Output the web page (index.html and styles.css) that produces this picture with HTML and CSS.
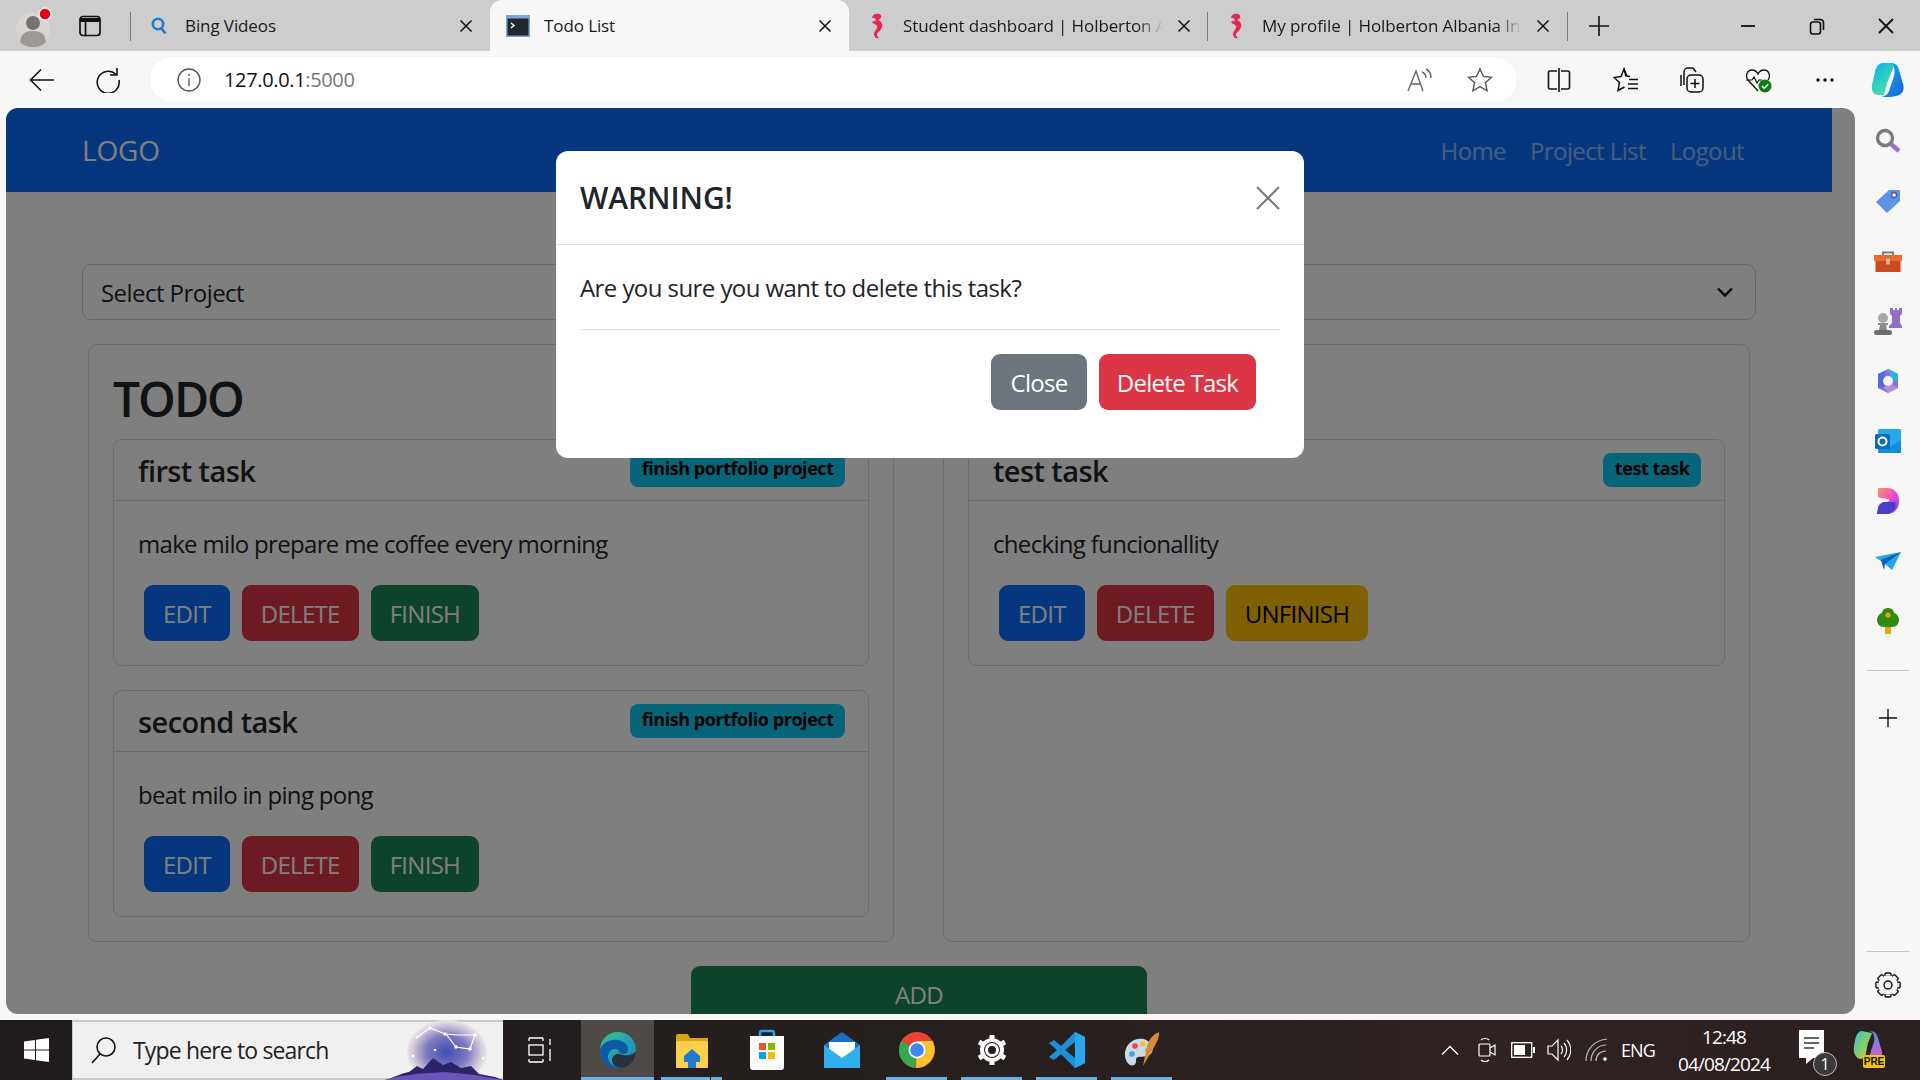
FILE: index.html
```html
<!DOCTYPE html>
<html lang="en">
<head>
<meta charset="utf-8">
<title>Todo List</title>
<link rel="stylesheet" href="styles.css">
</head>
<body>
<div class="tabstrip">
  <div class="strip-lead">
    <svg class="avatar" width="36" height="42" viewBox="0 0 36 42"><circle cx="17" cy="23" r="17" fill="#d8d6d2"/><circle cx="17" cy="17" r="7" fill="#77726c"/><path d="M4 36c1-9 6-11 13-11s12 2 13 11c-4 4-8 5-13 5s-9-1-13-5z" fill="#9c9893"/><circle cx="29" cy="8" r="6" fill="#e8000d" stroke="#f4f4f4" stroke-width="1.5"/></svg>
    <svg width="22" height="22" viewBox="0 0 22 22" fill="none" stroke="#111" stroke-width="1.7"><rect x="1" y="1.5" width="20" height="19" rx="3"/><path d="M1 5h20" stroke-width="4"/><path d="M6.5 5v15"/></svg>
  </div>
  <div class="tab">
    <span class="tab-icon"><svg width="18" height="20" viewBox="0 0 18 20" fill="none" stroke="#1f78d1" stroke-width="2.6"><circle cx="8" cy="8" r="5.2"/><path d="M11.5 12.5l4 5"/></svg></span>
    <span class="tab-title">Bing Videos</span>
    <svg class="tab-x" width="14" height="14" viewBox="0 0 14 14"><path d="M1.500 1.500l11 11M12.500 1.500l-11 11" stroke="#111" stroke-width="1.500"/></svg>
  </div>
  <div class="tab tab-active">
    <span class="tab-icon"><svg width="24" height="22" viewBox="0 0 24 22"><rect width="24" height="22" fill="#7ba7d8"/><rect x="1.500" y="3.500" width="21" height="17" fill="#23262a"/><path d="M5 8l3 2.500L5 13" stroke="#fff" stroke-width="1.300" fill="none"/></svg></span>
    <span class="tab-title">Todo List</span>
    <svg class="tab-x" width="14" height="14" viewBox="0 0 14 14"><path d="M1.500 1.500l11 11M12.500 1.500l-11 11" stroke="#111" stroke-width="1.500"/></svg>
  </div>
  <div class="tab">
    <span class="tab-icon"><svg width="14" height="26" viewBox="0 0 14 26"><path d="M6 1c4-1 6 2 5 4L8 7c3 1 5 4 4 7-1 4-5 5-5 8 0 2 2 2 2 3-3 1-5-1-5-4 0-3 4-5 3-8-1-2-4-2-5-4 1-1 3-1 4-1L5 5 2 5c0-2 2-4 4-4z" fill="#e8254f"/></svg></span>
    <span class="tab-title tab-fade">Student dashboard | Holberton A</span>
    <svg class="tab-x" width="14" height="14" viewBox="0 0 14 14"><path d="M1.500 1.500l11 11M12.500 1.500l-11 11" stroke="#111" stroke-width="1.500"/></svg>
  </div>
  <div class="tab tab-sep">
    <span class="tab-icon"><svg width="14" height="26" viewBox="0 0 14 26"><path d="M6 1c4-1 6 2 5 4L8 7c3 1 5 4 4 7-1 4-5 5-5 8 0 2 2 2 2 3-3 1-5-1-5-4 0-3 4-5 3-8-1-2-4-2-5-4 1-1 3-1 4-1L5 5 2 5c0-2 2-4 4-4z" fill="#e8254f"/></svg></span>
    <span class="tab-title tab-fade">My profile | Holberton Albania In</span>
    <svg class="tab-x" width="14" height="14" viewBox="0 0 14 14"><path d="M1.500 1.500l11 11M12.500 1.500l-11 11" stroke="#111" stroke-width="1.500"/></svg>
  </div>
  <div class="tab-end">
    <svg width="22" height="22" viewBox="0 0 22 22"><path d="M11 1v20M1 11h20" stroke="#111" stroke-width="1.600"/></svg>
  </div>
  <div class="winctl">
    <svg width="16" height="16" viewBox="0 0 16 16"><path d="M1 8h14" stroke="#111" stroke-width="1.800"/></svg>
    <svg width="16" height="18" viewBox="0 0 16 18" fill="none" stroke="#111" stroke-width="1.600"><rect x="1.500" y="5" width="10" height="12" rx="2.500"/><path d="M5 2.500h6c2 0 3.500 1.500 3.500 3.500v7"/></svg>
    <svg width="16" height="16" viewBox="0 0 16 16"><path d="M1 1l14 14M15 1L1 15" stroke="#111" stroke-width="1.800"/></svg>
  </div>
</div>

<div class="toolbar">
  <div class="tool-lead">
    <span class="slot"><svg width="26" height="24" viewBox="0 0 26 24" fill="none" stroke="#111" stroke-width="1.600"><path d="M25 12H2M12 1.500L1.500 12 12 22.500"/></svg></span>
    <span class="slot"><svg width="26" height="26" viewBox="0 0 26 26" fill="none" stroke="#111" stroke-width="1.600"><path d="M21 7.500A11 11 0 1 0 24 13"/><path d="M22 1v7h-7"/></svg></span>
  </div>
  <div class="address">
    <svg width="24" height="24" viewBox="0 0 24 24" fill="none" stroke="#555" stroke-width="1.400"><circle cx="12" cy="12" r="11"/><path d="M12 10.500V18M12 6v2"/></svg>
    <span class="url">127.0.0.1<span class="url-dim">:5000</span></span>
    <span class="addr-actions">
      <svg width="26" height="26" viewBox="0 0 26 26" fill="none" stroke="#666" stroke-width="1.400"><path d="M1 24L9 4l7 20M4 17h10"/><path d="M15 5c3 1 4 3 4 6M19 2c4 2 5 5 5 9"/></svg>
      <svg width="26" height="26" viewBox="0 0 26 26" fill="none" stroke="#555" stroke-width="1.400"><path d="M13 2l3.400 7.400 8 .9-6 5.400 1.700 8L13 19.700 5.900 23.700l1.700-8-6-5.400 8-.9z"/></svg>
    </span>
  </div>
  <div class="tool-actions">
    <span class="slot"><svg width="24" height="24" viewBox="0 0 24 24" fill="none" stroke="#111" stroke-width="1.600"><path d="M10 3H3a1.500 1.500 0 0 0-1.500 1.500v15A1.500 1.500 0 0 0 3 21h7M14 3h7a1.500 1.500 0 0 1 1.500 1.500v15A1.500 1.500 0 0 1 21 21h-7M12 0v24"/></svg></span>
    <span class="slot"><svg width="26" height="26" viewBox="0 0 26 26" fill="none" stroke="#111" stroke-width="1.500"><path d="M13 9.500L11 2 8 9.500l-7 1 5.500 5-1.500 8 6.500-3.500"/><path d="M11 2l3 7 3 .5"/><path d="M16 12.500h9M15 17h10M15 21.500h10"/></svg></span>
    <span class="slot"><svg width="26" height="28" viewBox="0 0 26 28" fill="none" stroke="#111" stroke-width="1.500"><path d="M5 19V6a4 4 0 0 1 4-4h5l3 4"/><path d="M2 20V9"/><rect x="8" y="9" width="16" height="17" rx="4"/><path d="M16 13v9M11.500 17.500h9"/></svg></span>
    <span class="slot"><svg width="28" height="26" viewBox="0 0 28 26"><path d="M13 24L3 13C0 9 2 3 7 3c3 0 5 2 6 4 1-2 3-4 6-4 5 0 7 6 4 10" fill="none" stroke="#111" stroke-width="1.300"/><path d="M1 13h6l2-3 3 6 2-3h3" fill="none" stroke="#111" stroke-width="1.200"/><circle cx="20" cy="19" r="6.500" fill="#107c10"/><path d="M17 19l2.200 2.200 4-4" stroke="#fff" stroke-width="1.500" fill="none"/></svg></span>
    <span class="slot"><svg width="20" height="6" viewBox="0 0 20 6" fill="#111"><circle cx="3" cy="3" r="1.700"/><circle cx="10" cy="3" r="1.700"/><circle cx="17" cy="3" r="1.700"/></svg></span>
  </div>
  <svg class="copilot" width="36" height="38" viewBox="0 0 36 38"><defs><linearGradient id="cp" x1="0" y1="0" x2=".6" y2="1"><stop offset="0" stop-color="#0fa8e8"/><stop offset=".55" stop-color="#2ecdc4"/><stop offset="1" stop-color="#4fe09c"/></linearGradient><linearGradient id="cb" x1="0" y1="0" x2="1" y2="1"><stop offset="0" stop-color="#1fb6f0"/><stop offset="1" stop-color="#1460d8"/></linearGradient></defs><path d="M11 2C7 3 5 6 4 11L1 24c-1 6 2 10 7 10h5l3-12 6-14c1-3 1-6-2-6z" fill="url(#cp)"/><path d="M20 2c4 0 7 2 8 7l4 14c2 6-1 11-7 12-3 1-8 1-14 1 5-2 7-4 8-9l4-12c1-4 1-10-3-13z" fill="url(#cb)"/></svg>
</div>

<div class="workspace">
  <main class="page">
    <div class="site">
      <nav class="navbar">
        <span class="brand">LOGO</span>
        <div class="nav-links">
          <a class="nav-link">Home</a>
          <a class="nav-link">Project List</a>
          <a class="nav-link">Logout</a>
        </div>
      </nav>
      <div class="content">
        <div class="select">
          <span>Select Project</span>
          <svg width="18" height="12" viewBox="0 0 18 12" fill="none" stroke="#111" stroke-width="2.400"><path d="M2 2.500l7 7 7-7"/></svg>
        </div>
        <div class="columns">
          <section class="column">
            <h1 class="col-title">TODO</h1>
            <article class="card">
              <header class="card-head"><h3 class="card-title">first task</h3><span class="badge">finish portfolio project</span></header>
              <div class="card-body">
                <p class="card-text">make milo prepare me coffee every morning</p>
                <div class="actions"><button class="btn btn-blue">EDIT</button><button class="btn btn-red">DELETE</button><button class="btn btn-green">FINISH</button></div>
              </div>
            </article>
            <article class="card">
              <header class="card-head"><h3 class="card-title">second task</h3><span class="badge">finish portfolio project</span></header>
              <div class="card-body">
                <p class="card-text">beat milo in ping pong</p>
                <div class="actions"><button class="btn btn-blue">EDIT</button><button class="btn btn-red">DELETE</button><button class="btn btn-green">FINISH</button></div>
              </div>
            </article>
          </section>
          <section class="column">
            <div class="col-title"></div>
            <article class="card">
              <header class="card-head"><h3 class="card-title">test task</h3><span class="badge">test task</span></header>
              <div class="card-body">
                <p class="card-text">checking funcionallity</p>
                <div class="actions"><button class="btn btn-blue">EDIT</button><button class="btn btn-red">DELETE</button><button class="btn btn-yellow">UNFINISH</button></div>
              </div>
            </article>
          </section>
        </div>
        <button class="btn btn-green btn-add">ADD</button>
      </div>
    </div>
    <div class="backdrop">
      <div class="modal">
        <header class="modal-head">
          <h2 class="modal-title">WARNING!</h2>
          <svg width="24" height="24" viewBox="0 0 24 24"><path d="M1 1l22 22M23 1L1 23" stroke="#7c7c7c" stroke-width="2.200"/></svg>
        </header>
        <div class="modal-body">
          <p class="modal-text">Are you sure you want to delete this task?</p>
          <hr class="modal-rule">
          <div class="modal-actions"><button class="btn btn-grey-solid">Close</button><button class="btn btn-red-solid">Delete Task</button></div>
        </div>
      </div>
    </div>
  </main>
  <aside class="sidebar">
    <span class="side-slot"><svg width="26" height="26" viewBox="0 0 26 26"><circle cx="10" cy="10" r="7.500" fill="none" stroke="#7a7a7a" stroke-width="3.400"/><path d="M16 16l8 7" stroke="#a070d8" stroke-width="4.500"/></svg></span>
    <span class="side-slot"><svg width="26" height="26" viewBox="0 0 26 26"><path d="M14 2h10a1 1 0 0 1 1 1v10L12 25 1 14z" fill="#5d92e6"/><circle cx="19" cy="7" r="2.500" fill="#fff" stroke="#4a4fa8" stroke-width="1.300"/></svg></span>
    <span class="side-slot"><svg width="28" height="22" viewBox="0 0 28 22"><path d="M9 6V2.500h10V6" fill="none" stroke="#7a7a7a" stroke-width="2"/><rect y="5" width="28" height="6" fill="#e96a32"/><rect x="1.500" y="11" width="25" height="11" fill="#cc4a1c"/><rect x="12" y="8.500" width="4" height="6" fill="#bbb"/></svg></span>
    <span class="side-slot"><svg width="28" height="28" viewBox="0 0 28 28"><path d="M16 1h3v2h2V1h2v2h2V1h3v6l-2 2v7l2 3v2H15v-2l3-3V9l-2-2z" fill="#9170c8"/><circle cx="9" cy="11" r="5" fill="#a8a8a8"/><path d="M4 16h10v2h-2l1 5H5l1-5H4z" fill="#8c8c8c"/><rect y="23" width="18" height="5" rx="2.500" fill="#6e6e6e"/></svg></span>
    <span class="side-slot"><svg width="26" height="26" viewBox="0 0 26 26"><path d="M13 1l10 5v14l-10 5-10-5V6z" fill="#8a6fd8"/><path d="M13 1l10 5v8l-6-3z" fill="#27b6d8"/><path d="M3 6l7-3-1 16-6 1z" fill="#4b6ed8"/><path d="M9 19l8-3 6 4-10 5z" fill="#b88ce0"/><circle cx="13" cy="13" r="5" fill="#f7f7f7"/></svg></span>
    <span class="side-slot"><svg width="26" height="24" viewBox="0 0 26 24"><rect x="3" width="23" height="24" rx="1.500" fill="#28a8ea"/><path d="M3 11l11.500 7L26 11v12a1 1 0 0 1-1 1H4a1 1 0 0 1-1-1z" fill="#0f8ee0"/><rect y="5" width="15" height="15" rx="1.500" fill="#0a6cbd"/><circle cx="7.500" cy="12.500" r="4" fill="none" stroke="#fff" stroke-width="2"/></svg></span>
    <span class="side-slot"><svg width="24" height="26" viewBox="0 0 24 26"><defs><linearGradient id="ds" x1="0" y1="0" x2="1" y2="1"><stop offset="0" stop-color="#fb9a5a"/><stop offset=".5" stop-color="#ea4fd0"/><stop offset="1" stop-color="#7a3fe0"/></linearGradient></defs><path d="M2 0h9c8 0 12 6 12 13 0 8-5 13-12 13H1l1-6c1-4 4-6 8-6 3 0 4-2 2-3-3-1-9 0-10-3z" fill="url(#ds)"/><path d="M1 26l1-6c1-4 4-6 8-6h9c3 5-3 12-8 12z" fill="#4b3dc8"/></svg></span>
    <span class="side-slot"><svg width="26" height="18" viewBox="0 0 26 18"><path d="M0 5L26 0 17 18l-7-6z" fill="#22a7ea"/><path d="M6 8L26 0 10 12l-1 6z" fill="#0d5db0"/></svg></span>
    <span class="side-slot"><svg width="22" height="26" viewBox="0 0 22 26"><rect x="8" y="17" width="6" height="9" fill="#e6a800"/><path d="M11 0c4 0 6 3 6 5 3 1 5 4 5 7 0 4-3 7-7 7H7c-4 0-7-3-7-7 0-3 2-6 5-7 0-2 2-5 6-5z" fill="#2f8b0e"/><circle cx="11" cy="7" r="2.500" fill="#e6a800"/></svg></span>
    <span class="side-rule"></span>
    <span class="side-slot side-plus"><svg width="18" height="18" viewBox="0 0 18 18"><path d="M9 0v18M0 9h18" stroke="#111" stroke-width="1.400"/></svg></span>
    <span class="side-rule side-rule-low"></span>
    <span class="side-slot"><svg width="26" height="26" viewBox="0 0 26 26" fill="none"><g stroke="#111" stroke-width="1.400"><rect x="10" y="1" width="6" height="24" rx="1"/><rect x="10" y="1" width="6" height="24" rx="1" transform="rotate(45 13 13)"/><rect x="10" y="1" width="6" height="24" rx="1" transform="rotate(90 13 13)"/><rect x="10" y="1" width="6" height="24" rx="1" transform="rotate(135 13 13)"/><circle cx="13" cy="13" r="9"/></g><circle cx="13" cy="13" r="9.800" fill="#f7f7f7"/><circle cx="13" cy="13" r="4" stroke="#111" stroke-width="1.400"/></svg></span>
  </aside>
</div>

<footer class="taskbar">
  <span class="start"><svg width="25" height="24" viewBox="0 0 25 24" fill="#fff"><path d="M0 3.500l11-1.500v9.500H0zM12 1.800L25 0v11.500H12zM0 12.500h11V22L0 20.500zM12 12.500h13V24l-13-1.800z"/></svg></span>
  <div class="task-search">
    <svg width="26" height="28" viewBox="0 0 26 28" fill="none" stroke="#111" stroke-width="1.600"><circle cx="15" cy="11" r="9"/><path d="M9 18L1 27"/></svg>
    <span class="search-text">Type here to search</span>
    <svg class="search-art" width="118" height="60" viewBox="0 0 118 60"><defs><radialGradient id="sa" cx=".5" cy=".5" r=".52"><stop offset="0" stop-color="#3c4fb4"/><stop offset=".5" stop-color="#7f79c0"/><stop offset=".8" stop-color="#cfc4d8"/><stop offset="1" stop-color="#f0f0f0"/></radialGradient></defs><ellipse cx="62" cy="32" rx="40" ry="32" fill="url(#sa)"/><path d="M0 60c8-2 14-6 24-8l8-6 6 3 10-11 10 7 8-3 10 6 10-2 8 8 16 3 8 3z" fill="#2c2468"/><path d="M0 60c10-4 20-4 30-6l30-2 30 3 28 5z" fill="#6a55b8"/><path d="M32 17l13-9 15 6 14 1 16 0-5 14-14-2-10-13" fill="none" stroke="#fff" stroke-width="1.200"/><g fill="#fff"><circle cx="45" cy="8" r="1.800"/><circle cx="60" cy="14" r="1.800"/><circle cx="90" cy="15" r="1.800"/><circle cx="85" cy="29" r="1.800"/><circle cx="71" cy="27" r="1.800"/><circle cx="32" cy="17" r="1.500"/><circle cx="28" cy="36" r="1.300"/><circle cx="50" cy="30" r="1.300"/><circle cx="98" cy="38" r="1.300"/></g></svg>
  </div>
  <div class="task-apps">
    <span class="task-slot task-view"><svg width="26" height="26" viewBox="0 0 26 26" fill="none" stroke="#fff" stroke-width="1.300"><path d="M1 1h14M1 25h14M1 25v-3M15 25v-3M1 1v3M15 1v3"/><rect x="1" y="8" width="14" height="10"/><path d="M22 2v6M22 12v12"/></svg></span>
    <span class="task-slot task-edge is-open"><svg width="38" height="38" viewBox="0 0 38 38"><defs><linearGradient id="ed" x1="0" y1="0" x2="1" y2="1"><stop offset="0" stop-color="#36c88a"/><stop offset="1" stop-color="#1a7ad0"/></linearGradient></defs><circle cx="19" cy="19" r="18" fill="url(#ed)"/><path d="M1 19C3 9 19 5 27 13c4 4 2 10-2 10-6 0-4-5-9-5S7 24 10 30c2 4 6 7 12 7C10 39 0 30 1 19z" fill="#0c59a4"/><path d="M24 24c6 1 11-1 13-4 0 8-6 16-14 17-6 0-10-3-10-8 0-4 4-7 8-6z" fill="#27343f"/></svg></span>
    <span class="task-slot is-open is-split"><svg width="32" height="36" viewBox="0 0 32 36"><path d="M0 4a2 2 0 0 1 2-2h10l2 4h18v30H0z" fill="#d8a318"/><rect y="9" width="32" height="27" rx="2" fill="#fbd14b"/><path d="M8 24l8-7 8 7v6h-4v6h-8v-6H8z" fill="#1f7cd0"/></svg></span>
    <span class="task-slot"><svg width="36" height="42" viewBox="0 0 36 42"><path d="M11 8V4a2 2 0 0 1 2-2h10a2 2 0 0 1 2 2v4" fill="none" stroke="#2aa0e8" stroke-width="2.500"/><path d="M1 7h34v31a3 3 0 0 1-3 3H4a3 3 0 0 1-3-3z" fill="#fbfbfb"/><rect x="10" y="14" width="7" height="7" fill="#f25022"/><rect x="19" y="14" width="7" height="7" fill="#7fba00"/><rect x="10" y="23" width="7" height="7" fill="#00a4ef"/><rect x="19" y="23" width="7" height="7" fill="#ffb900"/></svg></span>
    <span class="task-slot"><svg width="36" height="36" viewBox="0 0 36 36"><path d="M18 0l18 13v23H0V13z" fill="#1b6fc0"/><path d="M5 10h26v10l-13 8-13-8z" fill="#fff"/><path d="M0 13l18 13 18-13v23H0z" fill="#2fb0ec"/></svg></span>
    <span class="task-slot is-open"><svg width="36" height="36" viewBox="0 0 36 36"><circle cx="18" cy="18" r="18" fill="#ea4335"/><path d="M18 18L2.400 9C-1 15-1 22 2.400 27 5 32 10 35 16 36z" fill="#34a853"/><path d="M18 9h15.500C36 14 37 21 33 27 30 32 24 36 17 36z" fill="#fbc02d"/><circle cx="18" cy="18" r="8.500" fill="#fff"/><circle cx="18" cy="18" r="6.800" fill="#4285f4"/></svg></span>
    <span class="task-slot is-open"><svg width="28" height="30" viewBox="0 0 28 30" fill="none" stroke="#fff"><circle cx="14" cy="15" r="5.500" stroke-width="3"/><circle cx="14" cy="15" r="10" stroke-width="4"/><path d="M14 0v6M14 24v6M1 7l5 3M22 20l5 3M27 7l-5 3M6 20l-5 3" stroke-width="5"/></svg></span>
    <span class="task-slot is-open"><svg width="36" height="36" viewBox="0 0 36 36"><path d="M26 0l10 5v26l-10 5-14-14-7 6-5-3 8-7-8-7 5-3 7 6z" fill="#1c90d8"/><path d="M26 0l10 5v26l-10 5z" fill="#2aa6ee"/><path d="M26 10v16l-10-8z" fill="#2b2424"/></svg></span>
    <span class="task-slot is-open"><svg width="38" height="38" viewBox="0 0 38 38"><path d="M21 8C10 6 1 14 2 25c.5 6 5 11 9 9 4-2 0-7 4-8 5-1 11 1 14-5 3-5-2-11-8-13z" fill="#c9d9e6"/><circle cx="12" cy="15" r="2.800" fill="#e8483f"/><circle cx="20" cy="13" r="2.800" fill="#f2c12e"/><circle cx="9" cy="23" r="2.800" fill="#3fa0e0"/><circle cx="25" cy="19" r="2.600" fill="#55b04f"/><path d="M36 1c1 5-3 12-6 17L20 35l4-20c1-4 3-8 8-12z" fill="#d88a36"/></svg></span>
  </div>
  <div class="tray">
    <svg width="18" height="10" viewBox="0 0 18 10" fill="none" stroke="#fff" stroke-width="1.300"><path d="M1 9.500l8-8 8 8"/></svg>
    <svg width="18" height="26" viewBox="0 0 18 26" fill="none" stroke="#fff" stroke-width="1.200"><path d="M3 3c2-2 6-2 8 0M3 23c2 2 6 2 8 0"/><rect x="1" y="7" width="11" height="12" rx="1"/><path d="M12 11l5-3v10l-5-3"/></svg>
    <svg width="24" height="16" viewBox="0 0 24 16"><rect x=".7" y=".7" width="20" height="14.600" fill="none" stroke="#fff" stroke-width="1.300"/><rect x="3" y="3" width="11" height="10" fill="#fff"/><rect x="22" y="5" width="2" height="6" fill="#fff"/></svg>
    <svg width="24" height="24" viewBox="0 0 24 24" fill="none" stroke="#fff" stroke-width="1.200"><path d="M1 8h4l6-6v20l-6-6H1z"/><path d="M14 8c2 2 2 6 0 8M17 5c3.500 4 3.500 10 0 14M20 2c5 6 5 14 0 20"/></svg>
    <svg width="24" height="24" viewBox="0 0 24 24" fill="none" stroke="#bdbdbd" stroke-width="1.200"><path d="M1 23C1 11 10 2 22 1M6 23c0-9 7-16 15-16M11 23c0-6 4-10 10-10"/><circle cx="20" cy="21" r="1.800" fill="#fff" stroke="none"/></svg>
    <span class="tray-lang">ENG</span>
    <span class="clock"><span>12:48</span><span>04/08/2024</span></span>
    <span class="notify">
      <svg width="25" height="36" viewBox="0 0 25 36"><path d="M0 0h25v28H14l-7 6v-6H0z" fill="#fff"/><path d="M5 8h15M5 13h15M5 18h10" stroke="#333" stroke-width="1.400"/></svg>
      <span class="notify-count">1</span>
    </span>
    <svg width="34" height="38" viewBox="0 0 34 38"><defs><linearGradient id="cq" x1="0" y1="0" x2="1" y2="1"><stop offset="0" stop-color="#2bc2e8"/><stop offset=".5" stop-color="#7fcf68"/><stop offset="1" stop-color="#f3c730"/></linearGradient><linearGradient id="cr" x1="0" y1="0" x2="0" y2="1"><stop offset="0" stop-color="#4d8ee8"/><stop offset="1" stop-color="#e05ad0"/></linearGradient></defs><path d="M8 0C3 2 2 8 1 16c-1 6 2 12 7 12l4-2 3-14 4-10z" fill="url(#cq)"/><path d="M17 0c5 0 7 3 8 7l4 14c1 4-3 8-8 8H12c4-2 5-5 6-9l3-9c1-4 0-9-4-11z" fill="url(#cr)"/><rect x="10" y="24" width="22" height="13" rx="2" fill="#f4c20d"/><text class="pre-text" x="21" y="34">PRE</text></svg>
  </div>
</footer>
</body>
</html>
```
FILE: styles.css
```css
* { box-sizing: border-box; }
html, body { margin: 0; padding: 0; }
body {
  width: 1920px;
  height: 1080px;
  overflow: hidden;
  display: flex;
  flex-direction: column;
  background: #f7f7f7;
  font-family: "Open Sans", "Noto Sans", sans-serif;
  color: #212529;
}
h1, h2, h3, p { margin: 0; }
svg { display: block; flex: none; }

/* tab strip */
.tabstrip { height: 51px; flex: none; display: flex; align-items: center; background: #cdcdcd; }
.strip-lead { width: 131px; height: 100%; display: flex; align-items: center; gap: 27px; padding: 0 0 0 16px; position: relative; }
.strip-lead::after, .tab-sep::before, .tab-end::before {
  content: "";
  position: absolute;
  top: 12px;
  bottom: 10px;
  width: 1px;
  background: #7c7c7c;
}
.strip-lead::after { right: 0; }
.avatar { margin-top: 2px; }
.tab { width: 359px; height: 100%; flex: none; display: flex; align-items: center; padding: 0 17px 0 16px; position: relative; font-size: 17px; letter-spacing: -.1px; color: #1a1a1a; }
.tab-active { background: #f7f7f7; border-radius: 12px 12px 0 0; }
.tab-sep::before { left: -1px; }
.tab-icon { width: 24px; display: flex; justify-content: center; flex: none; margin-right: 14px; }
.tab-title { flex: 1; overflow: hidden; white-space: nowrap; margin-right: 14px; }
.tab-fade { -webkit-mask-image: linear-gradient(90deg, #000 90%, transparent 100%); mask-image: linear-gradient(90deg, #000 90%, transparent 100%); }
.tab-x { flex: none; }
.tab-end { position: relative; width: 60px; height: 100%; display: flex; align-items: center; padding-left: 21px; }
.tab-end::before { left: 0; }
.winctl { margin-left: auto; display: flex; align-items: center; gap: 53px; padding-right: 26px; }

/* toolbar */
.toolbar { height: 57px; flex: none; display: flex; align-items: center; background: #f7f7f7; position: relative; }
.tool-lead { display: flex; padding-left: 9px; width: 150px; }
.slot { width: 66px; display: flex; justify-content: center; align-items: center; }
.address { width: 1367px; height: 45px; background: #fff; border-radius: 22px; display: flex; align-items: center; padding: 0 24px 0 27px; box-shadow: 0 0 2px rgba(0,0,0,.05); }
.url { margin-left: 23px; font-size: 20px; letter-spacing: -.35px; color: #111; }
.url-dim { color: #767676; }
.addr-actions { margin-left: auto; display: flex; gap: 34px; }
.tool-actions { display: flex; margin-left: 9px; }
.tool-actions .slot { width: 66.5px; }
.copilot { margin-left: 12px; }

/* workspace */
.workspace { height: 912px; flex: none; display: flex; padding-left: 6px; }
.page { width: 1849px; height: 906px; position: relative; overflow: hidden; background: #fff; border-radius: 12px; }
.site { width: 1826px; height: 906px; }
.navbar { height: 84px; background: #0d6efd; display: flex; align-items: center; justify-content: space-between; padding: 0 88px 0 76px; }
.brand { font-size: 28px; letter-spacing: -.2px; color: #fff; }
.nav-links { display: flex; gap: 24px; }
.nav-link { font-size: 24px; letter-spacing: -.6px; color: rgba(255,255,255,.55); }
.content { width: 1827px; padding: 72px 77px 0 76px; display: flex; flex-direction: column; align-items: stretch; }
.select { height: 56px; border: 1px solid #ced4da; border-radius: 9px; display: flex; align-items: center; justify-content: space-between; padding: 0 21px 0 18px; font-size: 24px; letter-spacing: -.55px; }
.columns { margin-top: 24px; display: grid; grid-template-columns: 806px 807px; column-gap: 49px; padding: 0 6px; height: 598px; }
.column { border: 1px solid #d6d9dc; border-radius: 9px; padding: 24px; display: flex; flex-direction: column; gap: 24px; }
.col-title { font-size: 48px; line-height: 60px; margin-bottom: -24px; font-weight: 600; letter-spacing: -2px; height: 70px; color: #212529; flex: none; }
.card { height: 227px; flex: none; border: 1px solid #d6d9dc; border-radius: 9px; }
.card-head { height: 61px; border-bottom: 1px solid #d6d9dc; padding: 0 24px; display: flex; justify-content: space-between; align-items: flex-start; }
.card-title { font-size: 29px; line-height: 61px; font-weight: 600; letter-spacing: -.6px; }
.badge { margin: 13px -1px 0 0; height: 34px; padding: 0 11.5px; background: #0dcaf0; color: #000; border-radius: 8px; font-size: 18px; font-weight: 700; line-height: 30px; letter-spacing: -.45px; }
.card-body { padding: 25px 24px 0; }
.card-text { font-size: 24px; line-height: 36px; letter-spacing: -.68px; }
.actions { margin-top: 23px; margin-left: 6px; display: flex; gap: 12px; }
.btn { height: 56px; border: 0; border-radius: 9px; padding: 0 19px; font-family: inherit; font-size: 24px; letter-spacing: -.72px; color: #fff; }
.btn-blue { background: #0d6efd; }
.btn-red { background: #dc3545; }
.btn-green { background: #198754; }
.btn-yellow { background: #ffc107; color: #000; }
.btn-add { width: 456px; align-self: flex-start; margin: 24px 0 0 609px; flex: none; }

/* modal over the page */
.backdrop { position: absolute; inset: 0; background: rgba(0,0,0,.5); }
.modal { width: 748px; height: 307px; margin: 43px 0 0 550px; background: #fff; border-radius: 12px; }
.modal-head { height: 94px; border-bottom: 1px solid #dee2e6; display: flex; align-items: center; justify-content: space-between; padding: 0 24px 0 24px; }
.modal-title { font-size: 30px; font-weight: 600; letter-spacing: -.1px; }
.modal-body { padding: 25px 24px 0; }
.modal-text { font-size: 24px; line-height: 36px; letter-spacing: -.57px; }
.modal-rule { margin: 23px 0 0; border: 0; border-top: 1px solid #dee2e6; }
.modal-actions { margin-top: 24px; padding-right: 24px; display: flex; justify-content: flex-end; gap: 12px; }
.btn-grey-solid { background: #6c757d; width: 96px; padding: 0; }
.btn-red-solid { background: #dc3545; width: 157px; padding: 0; }

/* sidebar */
.sidebar { width: 65px; display: flex; flex-direction: column; align-items: center; padding-top: 3px; }
.side-slot { height: 60px; flex: none; display: flex; align-items: center; justify-content: center; }
.side-rule { width: 42px; height: 1px; background: #c4c4c4; margin-top: 19px; flex: none; }
.side-plus { margin-top: 17px; }
.side-rule-low { margin-top: 203px; }
.side-rule-low + .side-slot { margin-top: 3px; }

/* taskbar */
.taskbar { height: 60px; flex: none; display: flex; align-items: center; background: linear-gradient(90deg, #201c1c 0%, #251f1e 45%, #2f2222 80%, #2a2020 100%); color: #fff; }
.start { width: 72px; display: flex; justify-content: center; }
.task-search { width: 431px; height: 60px; background: #f0f0f0; border-top: 2px solid #c9c9c9; border-bottom: 2px solid #c9c9c9; border-left: 1px solid #c9c9c9; display: flex; align-items: center; padding-left: 18px; position: relative; color: #222; }
.search-text { margin-left: 16px; font-size: 23px; letter-spacing: -.85px; }
.search-art { position: absolute; right: 0; bottom: -2px; }
.task-apps { display: flex; height: 60px; }
.task-slot { width: 75px; height: 60px; flex: none; display: flex; justify-content: center; align-items: center; position: relative; }
.task-view { width: 78px; padding-right: 2px; }
.task-edge { width: 73px; background: #4f4a47; }
.is-open::after { content: ""; position: absolute; left: 7px; right: 7px; bottom: 0; height: 3px; background: #6cb0df; }
.task-edge::after { left: 0; right: 0; }
.is-split::before { content: ""; position: absolute; left: 56px; bottom: 0; width: 1px; height: 3px; background: #2a2222; z-index: 1; }
.tray { margin-left: auto; display: grid; grid-template-columns: 36px 37px 35px 37px 39px 44px 128px 48px 68px; justify-items: center; align-items: center; padding-right: 16px; font-size: 18px; }
.tray-lang { letter-spacing: -.8px; }
.clock { display: flex; flex-direction: column; align-items: center; gap: 5px; font-size: 19px; line-height: 22px; letter-spacing: -.9px; }
.notify { position: relative; width: 36px; height: 40px; margin-left: 10px; }
.notify-count { position: absolute; right: -2px; bottom: -6px; width: 24px; height: 24px; border-radius: 50%; background: #3a3a3a; border: 1.5px solid #bbb; display: flex; align-items: center; justify-content: center; font-size: 16px; }
.pre-text { font-family: "Liberation Sans", sans-serif; font-size: 10px; font-weight: 700; text-anchor: middle; fill: #111; }
```
